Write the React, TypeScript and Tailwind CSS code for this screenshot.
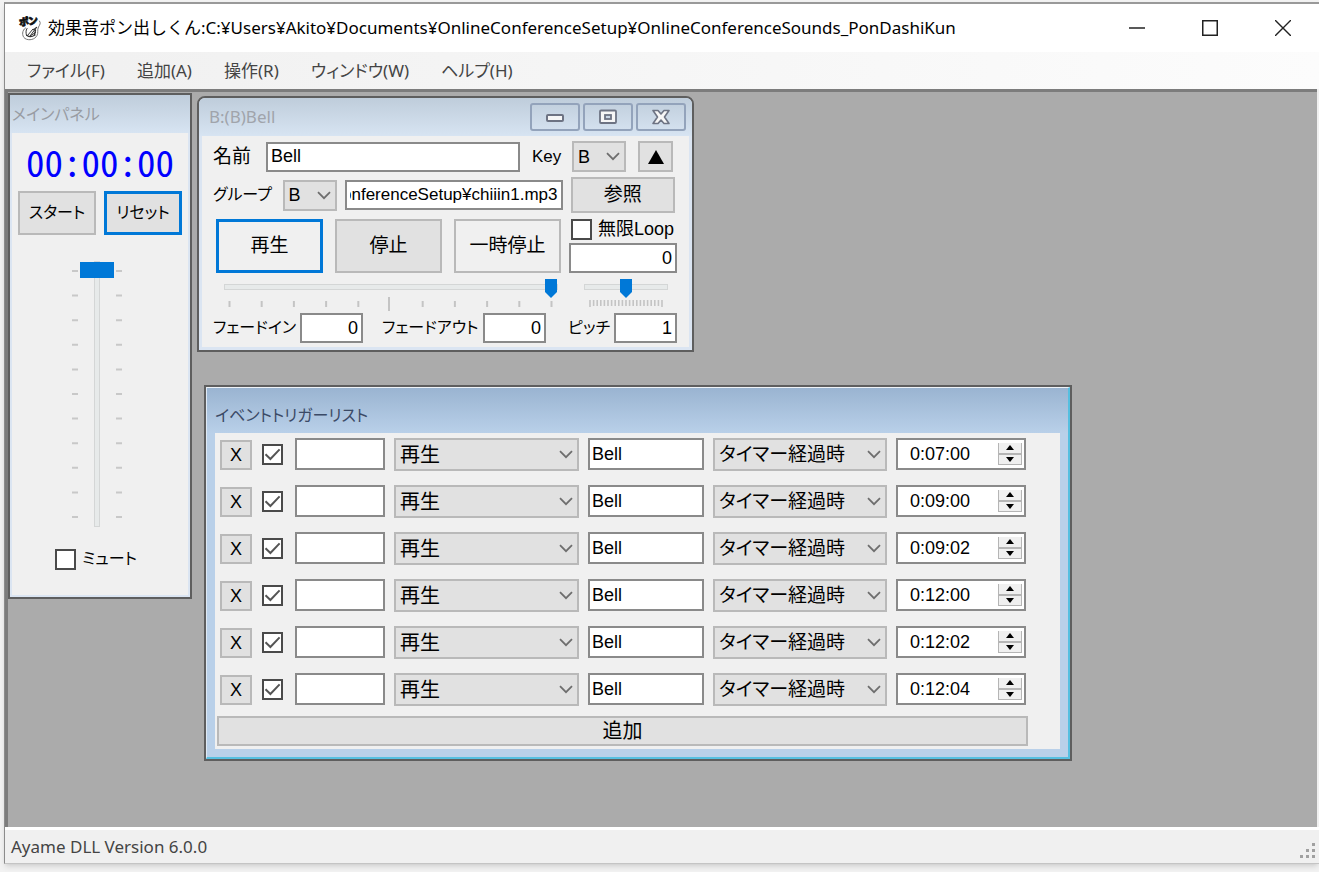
import React, { useEffect, useRef } from "react";

const uiFont = "font-['Noto_Sans','Noto_Sans_CJK_JP',sans-serif]";
const gothic = "font-['Liberation_Sans','Noto_Sans_CJK_JP',sans-serif] [font-feature-settings:'palt']";

const buttonBase = "flex items-center justify-center bg-[#e1e1e1] text-black";
const plainBorder = "border-2 border-[#b9b9b9]";
const focusBorder = "border-[3px] border-[#0078d7]";
const textBox = "border-2 border-[#8a8a8a] bg-white text-black outline-none";

function Chevron() {
  return (
    <svg viewBox="0 0 14 9" className="h-[9px] w-3.5" fill="none" stroke="#6e6e6e" strokeWidth="1.8">
      <path d="M1 1.2 7 7.2 13 1.2" />
    </svg>
  );
}

function Dropdown({ label, value, className, selectClass }: { label: string; value: string; className: string; selectClass: string }) {
  return (
    <div className={`relative shrink-0 ${className}`}>
      <select
        aria-label={label}
        defaultValue={value}
        className={`h-full w-full appearance-none border-2 border-[#b9b9b9] bg-[#e1e1e1] text-black outline-none ${selectClass}`}
      >
        <option>{value}</option>
      </select>
      <span className="pointer-events-none absolute inset-y-0 right-1.5 flex items-center">
        <Chevron />
      </span>
    </div>
  );
}

function CheckBox({ id, label, checked }: { id: string; label?: string; checked?: boolean }) {
  return (
    <span className="relative flex size-[21px] shrink-0">
      <input
        id={id}
        type="checkbox"
        defaultChecked={checked}
        aria-label={label}
        className="peer size-full appearance-none border-2 border-[#4a4a4a] bg-white"
      />
      <svg
        viewBox="0 0 21 21"
        className="pointer-events-none absolute inset-0 hidden size-full peer-checked:block"
        fill="none"
        stroke="#555"
        strokeWidth="2"
      >
        <path d="M3.5 10.2 8.4 15 17.6 5.4" />
      </svg>
    </span>
  );
}

function AppIcon() {
  return (
    <svg viewBox="0 0 24 26" className="h-[26px] w-6 shrink-0 overflow-visible" fill="none" stroke="#333" strokeWidth="1" strokeLinecap="round">
      <text
        x="0"
        y="10"
        fontSize="10"
        fontWeight="900"
        fill="#111"
        stroke="#111"
        strokeWidth="0.7"
        transform="rotate(-8 10 8)"
        fontFamily="Noto Sans CJK JP, sans-serif"
      >
        ポン
      </text>
      <path d="M6.500 13C3 15 2.500 21 6 23.500C10 26 16 24.500 18 20.500C19.500 17.500 18 15 19.500 12C21 9.500 22 8 20.500 6" stroke="#777" />
      <path d="M8 13.500C6.500 15.500 7 18 7.500 20.500M8.500 20.500L14 14l1.500 1-4.500 6 5.500-3.500" />
      <path d="M8 20.500c2 1.500 5 1.500 8-.5M15 14.500l2.500-2M16.500 15l-1 5" strokeWidth="1.300" />
    </svg>
  );
}

const mainTicks = Array.from({ length: 11 }, (_, i) => i);

function MainPanel() {
  return (
    <section className="absolute top-px left-0 w-[184px] border-2 border-[#5e5e5e] bg-[#dbe5f2] px-0.5 pb-0.5">
      <h2 className={`-mx-0.5 flex h-[38px] items-center bg-linear-to-b from-[#bfcddb] to-[#d7e4f2] pl-0.5 text-[16px] leading-6 text-[#989ca3] ${uiFont}`}>
        メインパネル
      </h2>
      <div className="flex flex-col items-center bg-[#f0f0f0] pb-6">
        <time className="mt-1.5 flex h-11 items-center font-['Noto_Sans_CJK_JP',monospace] text-[37px] leading-10 text-[#0000ff] [font-feature-settings:'hwid']">
          00:00:00
        </time>
        <div className="mt-2 flex gap-2 text-[16px] leading-6">
          <button className={`${buttonBase} ${plainBorder} h-11 w-[78px]`}>スタート</button>
          <button className={`${buttonBase} ${focusBorder} h-11 w-[78px]`}>リセット</button>
        </div>
        <div className="relative mt-[26px] mr-1.5 flex h-[266px] items-center">
          <svg viewBox="0 0 50 266" className="h-[266px] w-[50px]" stroke="#c8c8c8" strokeWidth="2">
            {mainTicks.map((i) => (
              <path key={i} d={`M0 ${10 + i * 24.6}h6M44 ${10 + i * 24.6}h6`} />
            ))}
          </svg>
          <input
            type="range"
            aria-label="音量"
            min={0}
            max={10}
            defaultValue={10}
            className="absolute inset-y-0 left-2 h-[266px] w-[34px] appearance-none bg-transparent [direction:rtl] [writing-mode:vertical-lr] [&::-webkit-slider-runnable-track]:mx-auto [&::-webkit-slider-runnable-track]:w-1.5 [&::-webkit-slider-runnable-track]:border [&::-webkit-slider-runnable-track]:border-[#d4d6d6] [&::-webkit-slider-runnable-track]:bg-[#e7eaea] [&::-webkit-slider-thumb]:-ml-[15px] [&::-webkit-slider-thumb]:h-4 [&::-webkit-slider-thumb]:w-[34px] [&::-webkit-slider-thumb]:appearance-none [&::-webkit-slider-thumb]:bg-[#0078d7]"
          />
        </div>
        <div className="mt-5 mr-2 flex items-center gap-1.5 text-[16px] leading-6">
          <CheckBox id="mute" />
          <label htmlFor="mute">ミュート</label>
        </div>
      </div>
    </section>
  );
}

const caption =
  "flex h-7 w-[50px] items-center justify-center rounded-[3px] border-2 border-[#93a3bb] bg-linear-to-b from-[#c3d1df] to-[#d3e0ee]";
const sliderBase =
  "block h-5 appearance-none bg-transparent [&::-webkit-slider-runnable-track]:h-1.5 [&::-webkit-slider-runnable-track]:border [&::-webkit-slider-runnable-track]:border-[#d4d6d6] [&::-webkit-slider-runnable-track]:bg-[#e7eaea] [&::-webkit-slider-thumb]:-mt-1.5 [&::-webkit-slider-thumb]:h-[19px] [&::-webkit-slider-thumb]:w-3 [&::-webkit-slider-thumb]:appearance-none [&::-webkit-slider-thumb]:bg-[#0078d7] [&::-webkit-slider-thumb]:[clip-path:polygon(0_0,100%_0,100%_68%,50%_100%,0_68%)]";

function BellWindow() {
  const path = useRef<HTMLInputElement>(null);
  useEffect(() => {
    if (path.current) path.current.scrollLeft = path.current.scrollWidth;
  }, []);
  return (
    <section className="absolute top-1 left-[189px] w-[497px] rounded-t-lg border-2 border-[#5e5e5e] bg-[#dbe5f2] px-[3px] pb-[3px]">
      <header className="-mx-[3px] flex h-[38px] items-center justify-between rounded-t-md bg-linear-to-b from-[#bfcddb] to-[#d7e4f2] pr-1.5 pl-2.5">
        <h2 className={`text-[17px] leading-6 text-[#a0a4ab] ${uiFont}`}>B:(B)Bell</h2>
        <div className="flex gap-[3px]">
          <button aria-label="最小化" className={caption}>
            <svg viewBox="0 0 20 16" className="h-4 w-5" fill="#f6f6f6" stroke="#6d7383" strokeWidth="2">
              <rect x="2" y="6" width="16" height="6" rx="1" />
            </svg>
          </button>
          <button aria-label="最大化" className={caption}>
            <svg viewBox="0 0 20 16" className="h-4 w-5" fill="#f6f6f6" stroke="#6d7383" strokeWidth="1.800">
              <rect x="2" y="1.500" width="16" height="12.500" rx="1" />
              <rect x="7" y="6" width="6" height="4" fill="#c9d6e4" />
            </svg>
          </button>
          <button aria-label="閉じる" className={caption}>
            <svg viewBox="0 0 20 16" className="h-4 w-5" fill="#f6f6f6" stroke="#6d7383" strokeWidth="1.600" strokeLinejoin="round">
              <path d="M2 1.500h5l3 3.500 3-3.500h5L13.500 8l4.500 6.500h-5L10 11l-3 3.500H2L6.500 8z" />
            </svg>
          </button>
        </div>
      </header>
      <div className="bg-[#f0f0f0] pt-[5px] pr-3.5 pb-1 pl-[11px] text-[18px] leading-6">
        <div className="flex h-[31px] items-center">
          <label htmlFor="name" className="w-[53px] text-[19px]">名前</label>
          <input id="name" defaultValue="Bell" className={`${textBox} h-[30px] w-[254px] px-[3px]`} />
          <label htmlFor="key" className="ml-3 w-10 text-[17px]">Key</label>
          <Dropdown label="Key" value="B" className="h-[31px] w-[54px]" selectClass="pl-1" />
          <button aria-label="上へ" className={`${buttonBase} ${plainBorder} ml-3 h-[31px] w-[35px]`}>
            <svg viewBox="0 0 16 14" className="h-3.5 w-4"><path d="M8 0l8 14H0z" /></svg>
          </button>
        </div>
        <div className="mt-[5px] flex h-9 items-center">
          <label className="w-[70px] text-[16px]">グループ</label>
          <Dropdown label="グループ" value="B" className="h-[31px] w-[54px]" selectClass="pl-1" />
          <input
            ref={path}
            aria-label="ファイル"
            defaultValue="OnlineConferenceSetup¥chiiin1.mp3"
            className={`${textBox} ml-2 h-[30px] w-[218px] px-[3px] text-[17px]`}
          />
          <button className={`${buttonBase} ${plainBorder} ml-2 h-9 w-[105px] text-[19px]`}>参照</button>
        </div>
        <div className="mt-1.5 -mr-0.5 flex justify-between">
          <div className="ml-[3px] flex gap-3 text-[19px]">
            <button className={`flex h-[54px] w-[107px] items-center justify-center bg-[#f0f0f0] ${focusBorder}`}>再生</button>
            <button className={`${buttonBase} ${plainBorder} h-[54px] w-[107px]`}>停止</button>
            <button className={`flex h-[54px] w-[107px] items-center justify-center bg-[#f0f0f0] ${plainBorder}`}>一時停止</button>
          </div>
          <div className="w-[108px]">
            <div className="flex h-6 items-center gap-1.5 pb-1 pl-0.5">
              <CheckBox id="loop" />
              <label htmlFor="loop" className="whitespace-nowrap">無限Loop</label>
            </div>
            <input aria-label="ループ回数" defaultValue="0" className={`${textBox} block h-[30px] w-full px-[3px] text-right`} />
          </div>
        </div>
        <div className="mt-1 flex justify-between">
          <div className="ml-[11px]">
            <input type="range" aria-label="音量" min={0} max={10} defaultValue={10} className={`${sliderBase} w-[334px]`} />
            <svg viewBox="0 0 334 16" className="block h-4 w-[334px]" stroke="#c4c4c4" strokeWidth="2">
              {mainTicks.map((i) => (
                <path key={i} d={i === 5 ? "M165 0v14" : `M${5.5 + i * 32.2} 4v6`} />
              ))}
            </svg>
          </div>
          <div className="mr-[7px]">
            <input type="range" aria-label="ピッチ" min={0} max={20} defaultValue={10} className={`${sliderBase} w-[84px]`} />
            <svg viewBox="0 0 84 16" className="block h-4 w-[84px]" stroke="#c4c4c4" strokeWidth="1.600">
              {Array.from({ length: 21 }, (_, i) => (
                <path key={i} d={`M${6 + i * 3.6} ${i % 20 === 0 ? "3v7" : "3v6"}`} />
              ))}
            </svg>
          </div>
        </div>
        <div className="-mr-0.5 flex h-[30px] items-center">
          <label htmlFor="fadein" className="w-[87px] text-[16px] whitespace-nowrap">フェードイン</label>
          <input id="fadein" defaultValue="0" className={`${textBox} h-[30px] w-[63px] px-[3px] text-right`} />
          <label htmlFor="fadeout" className="ml-[19px] w-[101px] text-[16px] whitespace-nowrap">フェードアウト</label>
          <input id="fadeout" defaultValue="0" className={`${textBox} h-[30px] w-[63px] px-[3px] text-right`} />
          <label htmlFor="pitch" className="ml-[22px] w-[46px] text-[16px] whitespace-nowrap">ピッチ</label>
          <input id="pitch" defaultValue="1" className={`${textBox} h-[30px] w-[63px] px-[3px] text-right`} />
        </div>
      </div>
    </section>
  );
}

const events = ["0:07:00", "0:09:00", "0:09:02", "0:12:00", "0:12:02", "0:12:04"];

function TriggerWindow() {
  return (
    <section className="absolute top-[293px] left-[196px] w-[868px] border-2 border-[#5e5e5e] bg-[#b9d0e9]">
      <div className="border-t border-r-2 border-b-2 border-l border-t-[#eef3f8] border-r-[#55bfe0] border-b-[#55bfe0] border-l-[#dfe9f4] pb-2">
        <h2 className={`flex h-[45px] items-center bg-linear-to-b from-[#9ab4d1] to-[#b9d0e9] pt-2 pl-2 text-[16px] leading-6 text-[#3b4a66] [font-feature-settings:'palt'] ${uiFont}`}>
          イベントトリガーリスト
        </h2>
        <div className="mx-2 bg-[#f0f0f0] pt-[5px] pr-8 pb-[3px] pl-0.5 text-[18px] leading-6">
          <ul className="flex flex-col gap-3.5 pl-[3px]">
            {events.map((time, i) => (
              <li key={i} className="flex h-[33px] items-start">
                <button aria-label="削除" className={`${buttonBase} ${plainBorder} mt-0.5 h-[30px] w-8`}>X</button>
                <span className="mt-1.5 ml-2.5">
                  <CheckBox id={`enabled-${i}`} label="有効" checked />
                </span>
                <input aria-label="トリガー名" className={`${textBox} ml-3 h-8 w-[90px] px-1`} />
                <Dropdown label="操作" value="再生" className="ml-[9px] h-[33px] w-[185px]" selectClass="pl-1 text-[20px]" />
                <input aria-label="対象" defaultValue="Bell" className={`${textBox} ml-[9px] h-8 w-[116px] px-0.5`} />
                <Dropdown label="条件" value="タイマー経過時" className="ml-[9px] h-[33px] w-[174px]" selectClass="pl-1 text-[19px]" />
                <div className={`${textBox} ml-[9px] flex h-8 w-[130px]`}>
                  <input aria-label="時間" defaultValue={time} className="w-[100px] pl-3 outline-none" />
                  <div className="mt-[3px] mb-[3px] flex w-6 flex-col border-x border-[#b5b5b5] bg-[#f0f0f0]">
                    <button aria-label="増やす" className="flex flex-1 items-center justify-center border-b-2 border-[#b5b5b5]">
                      <svg viewBox="0 0 10 6" className="h-[5px] w-2"><path d="M5 0l5 6H0z" /></svg>
                    </button>
                    <button aria-label="減らす" className="flex flex-1 items-center justify-center border-b border-[#b5b5b5]">
                      <svg viewBox="0 0 10 6" className="h-[5px] w-2"><path d="M0 0h10L5 6z" /></svg>
                    </button>
                  </div>
                </div>
              </li>
            ))}
          </ul>
          <button className={`${buttonBase} ${plainBorder} mt-2.5 h-[30px] w-full text-[20px]`}>追加</button>
        </div>
      </div>
    </section>
  );
}

const menus = ["ファイル(F)", "追加(A)", "操作(R)", "ウィンドウ(W)", "ヘルプ(H)"];

export default function App() {
  return (
    <div className={`flex min-h-screen flex-col overflow-hidden bg-[#f2f2f2] pt-0.5 pb-2 pl-1 text-black ${gothic}`}>
      <div className="flex flex-1 flex-col border-t-2 border-b border-l border-t-[#999] border-b-[#c4c4c4] border-l-[#8c8c8c] bg-[#f0f0f0] shadow-md">
        <header className={`flex h-12 items-center bg-white ${uiFont}`}>
          <div className="flex flex-1 items-center gap-[5px] pl-3.5">
            <AppIcon />
            <h1 className="text-[17px] leading-6 whitespace-nowrap [font-feature-settings:normal]">
              効果音ポン出しくん:C:¥Users¥Akito¥Documents¥OnlineConferenceSetup¥OnlineConferenceSounds_PonDashiKun
            </h1>
          </div>
          <div className="flex h-full text-[#222]">
            <button aria-label="最小化" className="flex w-[73px] items-center justify-center">
              <svg viewBox="0 0 16 16" className="size-4" stroke="currentColor" strokeWidth="1.500"><path d="M0 8h16" /></svg>
            </button>
            <button aria-label="最大化" className="flex w-[73px] items-center justify-center">
              <svg viewBox="0 0 16 16" className="size-4" fill="none" stroke="currentColor" strokeWidth="1.500"><path d="M.75.75h14.500v14.500H.75z" /></svg>
            </button>
            <button aria-label="閉じる" className="flex w-[73px] items-center justify-center">
              <svg viewBox="0 0 16 16" className="size-4" stroke="currentColor" strokeWidth="1.400"><path d="M0 0l16 16M16 0L0 16" /></svg>
            </button>
          </div>
        </header>
        <nav className={`flex h-[37px] items-center gap-8 bg-linear-to-r from-[#f0f0f0] to-[#fcfcfc] pl-[22px] text-[17px] leading-6 text-[#444] ${uiFont}`}>
          {menus.map((m) => (
            <button key={m} className="whitespace-nowrap">{m}</button>
          ))}
        </nav>
        <main className="relative mr-0.5 min-h-[738px] flex-1 border-t-[3px] border-l-[3px] border-t-[#7c7c7c] border-l-[#7c7c7c] bg-[#ababab]">
          <MainPanel />
          <BellWindow />
          <TriggerWindow />
        </main>
        <footer className={`flex h-9 items-center justify-between border-t-[3px] border-white pr-1 pl-1.5 text-[17px] leading-6 text-[#444] ${uiFont}`}>
          <span>Ayame DLL Version 6.0.0</span>
          <svg viewBox="0 0 16 16" className="mb-1 size-4 self-end" fill="#a0a0a0">
            <path d="M13 0h3v3h-3zM7 6h3v3H7zM13 6h3v3h-3zM1 12h3v3H1zM7 12h3v3H7zM13 12h3v3h-3z" />
          </svg>
        </footer>
      </div>
    </div>
  );
}
